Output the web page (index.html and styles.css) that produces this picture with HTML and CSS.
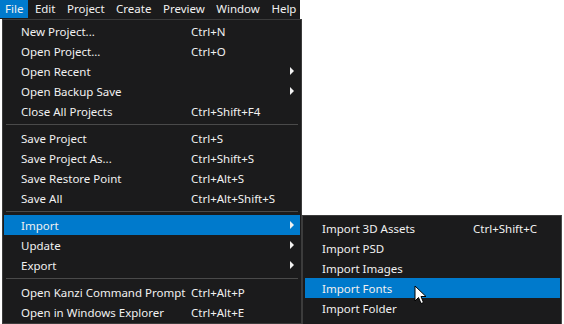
FILE: index.html
```html
<!DOCTYPE html>
<html lang="en">
<head>
<meta charset="utf-8">
<title>File menu</title>
<link rel="stylesheet" href="styles.css">
</head>
<body>
<div class="menubar">
  <span class="top active">File</span>
  <span class="top">Edit</span>
  <span class="top">Project</span>
  <span class="top">Create</span>
  <span class="top">Preview</span>
  <span class="top">Window</span>
  <span class="top">Help</span>
</div>
<div class="menus">
  <ul class="menu main">
    <li><span class="label">New Project...</span><span class="key">Ctrl+N</span></li>
    <li><span class="label">Open Project...</span><span class="key">Ctrl+O</span></li>
    <li class="sub"><span class="label">Open Recent</span></li>
    <li class="sub"><span class="label">Open Backup Save</span></li>
    <li><span class="label">Close All Projects</span><span class="key">Ctrl+Shift+F4</span></li>
    <li class="sep"></li>
    <li><span class="label">Save Project</span><span class="key">Ctrl+S</span></li>
    <li><span class="label">Save Project As...</span><span class="key">Ctrl+Shift+S</span></li>
    <li><span class="label">Save Restore Point</span><span class="key">Ctrl+Alt+S</span></li>
    <li><span class="label">Save All</span><span class="key">Ctrl+Alt+Shift+S</span></li>
    <li class="sep"></li>
    <li class="sub hot"><span class="label">Import</span></li>
    <li class="sub"><span class="label">Update</span></li>
    <li class="sub"><span class="label">Export</span></li>
    <li class="sep"></li>
    <li><span class="label">Open Kanzi Command Prompt</span><span class="key">Ctrl+Alt+P</span></li>
    <li><span class="label">Open in Windows Explorer</span><span class="key">Ctrl+Alt+E</span></li>
  </ul>
  <ul class="menu submenu">
    <li><span class="label">Import 3D Assets</span><span class="key">Ctrl+Shift+C</span></li>
    <li><span class="label">Import PSD</span></li>
    <li><span class="label">Import Images</span></li>
    <li class="hot"><span class="label">Import Fonts</span></li>
    <li><span class="label">Import Folder</span></li>
  </ul>
</div>
<svg class="cursor" width="14" height="21" viewBox="0 0 14 21">
  <path d="M1 1 L1 16 L4.5 12.5 L7 18.5 L9.5 17.5 L7 11.5 L12 11.5 Z" fill="#fff" stroke="#000" stroke-width="1"/>
</svg>
</body>
</html>
```

FILE: styles.css
```css
body { margin: 0; background: #fff; font-family: "Noto Sans", "DejaVu Sans", sans-serif; font-size: 11.5px; color: #f1f1f1; position: relative; height: 324px; overflow: hidden; }

.menubar { display: flex; width: 300px; height: 19px; background: #1b1b1c; }
.top { padding: 0 5px; line-height: 18px; height: 18px; margin-right: 1.5px; }
.top.active { background: #007acc; }

.menus { display: flex; align-items: flex-start; }
.menu { list-style: none; margin: 0; padding: 1px 0; background: #1b1b1c; border: 1px solid #3c3c3c; }
.menu li { display: flex; align-items: center; height: 20px; margin: 0 1px; position: relative; }
.menu .label { white-space: nowrap; }
.menu .key { white-space: nowrap; }
.menu li.hot { background: #007acc; }
.menu li.sep { height: 7px; }
.menu li.sep::after { content: ""; flex: 1; height: 1px; background: #4a4a4a; margin: 0 2px; }
.menu li.sub::after { content: ""; position: absolute; right: 6px; top: 6px; border-left: 4px solid #f1f1f1; border-top: 4px solid transparent; border-bottom: 4px solid transparent; }

.main { width: 298px; margin-left: 2px; height: 301px; }
.main .label { width: 170px; padding-left: 17px; }

.submenu { width: 258px; margin-top: 196px; padding-top: 2px; height: 106px; border-right-color: #4a4a4a; }
.submenu li { margin: 0 1px 0 2px; }
.submenu .label { width: 151px; padding-left: 17px; }

.cursor { position: absolute; left: 414px; top: 285px; }
```
